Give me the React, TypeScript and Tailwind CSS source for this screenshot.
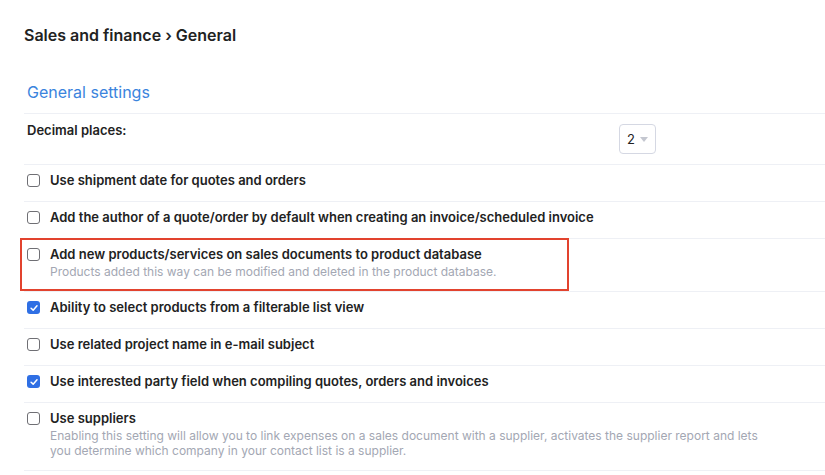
import React from "react";

interface Setting {
  title: string;
  description?: string;
  checked: boolean;
  highlighted?: boolean;
}

const settings: Setting[] = [
  { title: "Use shipment date for quotes and orders", checked: false },
  {
    title: "Add the author of a quote/order by default when creating an invoice/scheduled invoice",
    checked: false,
  },
  {
    title: "Add new products/services on sales documents to product database",
    description: "Products added this way can be modified and deleted in the product database.",
    checked: false,
    highlighted: true,
  },
  { title: "Ability to select products from a filterable list view", checked: true },
  { title: "Use related project name in e-mail subject", checked: false },
  { title: "Use interested party field when compiling quotes, orders and invoices", checked: true },
  {
    title: "Use suppliers",
    description:
      "Enabling this setting will allow you to link expenses on a sales document with a supplier, activates the supplier report and lets you determine which company in your contact list is a supplier.",
    checked: false,
  },
];

const Checkbox: React.FC<{ checked: boolean }> = ({ checked }) =>
  checked ? (
    <span className="mt-[3px] flex h-[13px] w-[13px] shrink-0 items-center justify-center rounded-[3px] bg-[#2f6fe4]">
      <svg viewBox="0 0 12 12" className="h-[10px] w-[10px]">
        <path d="M2.5 6.3 L5 8.6 L9.6 3.4" fill="none" stroke="white" strokeWidth="1.8" strokeLinecap="round" strokeLinejoin="round" />
      </svg>
    </span>
  ) : (
    <span className="mt-[3px] h-[13px] w-[13px] shrink-0 rounded-[3px] border border-[#6f6f74] bg-white" />
  );

const App: React.FC = () => {
  return (
    <div className="min-h-[475px] overflow-hidden bg-white pt-[23px] text-[#222] [font-family:Inter,'Noto_Sans',sans-serif]">
      <h1 className="pl-6 text-[16px] font-semibold leading-6 text-[#222]">Sales and finance › General</h1>

      <div className="ml-6 mt-[33px]">
        {/* heading */}
        <div className="border-b border-[#eef0f5] pb-[9px] pl-[3px]">
          <h2 className="text-[16px] leading-6 text-[#3a84dd]">General settings</h2>
        </div>

        {/* decimal places */}
        <div className="flex items-start border-b border-[#eef0f5] pb-[10px] pt-[7px]">
          <div className="w-[595px] pl-[3px] text-[13px] font-semibold leading-[18px]">Decimal places:</div>
          <div className="mt-[3px] flex h-[30px] w-[37px] items-center justify-center gap-[5px] rounded-[4px] border border-[#d5d8e3] bg-white">
            <span className="text-[13px] leading-none text-[#222]">2</span>
            <svg viewBox="0 0 8 5" className="h-[5px] w-[8px]">
              <path d="M0 0 H8 L4 5 Z" fill="#c4c7d0" />
            </svg>
          </div>
        </div>

        {/* checkbox rows */}
        {settings.map((s) => (
          <div key={s.title} className="relative flex items-start gap-[10px] border-b border-[#eef0f5] pb-[12px] pl-[3px] pt-[6px]">
            <Checkbox checked={s.checked} />
            <div>
              <div className="text-[13px] font-semibold leading-[18px] text-[#222]">{s.title}</div>
              {s.description && (
                <p className="mt-[1px] max-w-[718px] text-[12px] leading-[15px] text-[#a3a7b3]">{s.description}</p>
              )}
            </div>
            {s.highlighted && (
              <div className="pointer-events-none absolute -left-1 -top-[1px] h-[53px] w-[549px] border-2 border-[#e2432e]" />
            )}
          </div>
        ))}
      </div>
    </div>
  );
};

export default App;
